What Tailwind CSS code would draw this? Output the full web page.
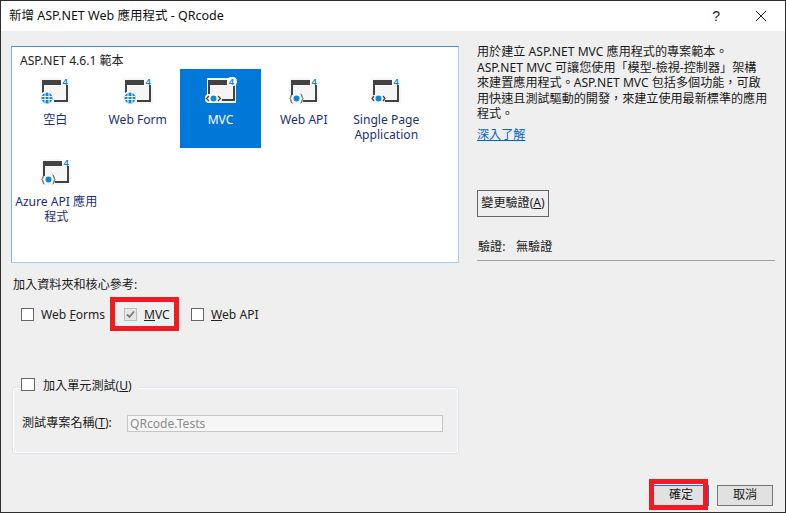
<!doctype html>
<html lang="zh-Hant">
<head>
<meta charset="utf-8">
<script src="https://cdn.jsdelivr.net/npm/@tailwindcss/browser@4"></script>
</head>
<body class="m-0 overflow-hidden">
<div class="w-[786px] h-[513px] flex flex-col bg-[#efefef] border border-[#2e2e2e] text-[12.1px] text-[#1a1a1a] font-['Noto_Sans','Noto_Sans_CJK_TC',sans-serif]">
  <!-- title bar -->
  <div class="h-[30px] shrink-0 bg-white flex items-center pl-[8px]">
    <span class="text-[12.5px] text-[#111]">新增 ASP.NET Web 應用程式 - QRcode</span>
    <span class="ml-auto text-[14px] leading-none mr-[35px] font-['Liberation_Sans'] text-[#222]">?</span>
    <svg class="mr-[18px]" width="12" height="12" viewBox="0 0 12 12"><path d="M1 1 L11 11 M11 1 L1 11" stroke="#222" stroke-width="1" fill="none"/></svg>
  </div>
  <!-- body -->
  <div class="flex flex-1 min-h-0">
    <!-- left column -->
    <div class="w-[458px] ml-[10px] shrink-0 flex flex-col">
      <div class="mt-[15px] h-[217px] w-[448px] bg-white border border-t-[#4b8fca] border-l-[#7fb2dc] border-r-[#a9cfee] border-b-[#a9cfee] pt-[6px] pl-[3px]">
        <div class="pl-[5px] h-[16px] leading-[16px] text-[#222]">ASP.NET 4.6.1 範本</div>
        <div class="grid grid-cols-[repeat(5,82.5px)] auto-rows-[79px]">
          <!-- 空白 -->
          <div class="flex flex-col items-center pt-[8px] pr-[2px] text-[#1c2f78] text-center leading-[15px]">
            <svg width="30" height="28" viewBox="0 0 30 28"><rect x="0" y="1" width="30" height="26" fill="#f6f6f6"/><path d="M2 3h19v5H4v12H2z" fill="#424242"/><path d="M26 8h2v17H14v-2h12z" fill="#424242"/><circle cx="7" cy="21" r="7" fill="#fff"/><circle cx="7" cy="21" r="5.5" fill="#0f87d8"/><path d="M2 19.500h10M2 22.500h10M5 16v10M9 16v10" stroke="#fff" stroke-width="1" fill="none"/><rect x="21" y="0" width="9" height="8" fill="#fff"/><text x="22.500" y="7.500" font-size="9.500" font-weight="700" fill="#0f87d8" font-family="Liberation Sans">4</text></svg>
            <span class="mt-[7px]">空白</span>
          </div>
          <!-- Web Form -->
          <div class="flex flex-col items-center pt-[8px] pr-[2px] text-[#1c2f78] text-center leading-[15px]">
            <svg width="30" height="28" viewBox="0 0 30 28"><rect x="0" y="1" width="30" height="26" fill="#f6f6f6"/><path d="M2 3h19v5H4v12H2z" fill="#424242"/><path d="M26 8h2v17H14v-2h12z" fill="#424242"/><circle cx="7" cy="21" r="7" fill="#fff"/><circle cx="7" cy="21" r="5.500" fill="#0f87d8"/><path d="M2 19.500h10M2 22.500h10M5 16v10M9 16v10" stroke="#fff" stroke-width="1" fill="none"/><rect x="21" y="0" width="9" height="8" fill="#fff"/><text x="22.500" y="7.500" font-size="9.500" font-weight="700" fill="#0f87d8" font-family="Liberation Sans">4</text></svg>
            <span class="mt-[7px]">Web Form</span>
          </div>
          <!-- MVC -->
          <div class="flex flex-col items-center pt-[8px] mr-[1.500px] bg-[#0078d7] text-white text-center leading-[15px]">
            <svg width="32" height="28" viewBox="0 0 32 28"><rect x="2" y="1" width="29" height="25" fill="#f4f4f4"/><path d="M3 3h19v5H5v12H3z" fill="#424242"/><path d="M28 8h2v16H15v-2h13z" fill="#424242"/><rect x="0" y="17" width="17" height="9" rx="4" fill="#fff"/><path d="M4 19l-2.500 2.500L4 24M13 19l2.500 2.500L13 24" stroke="#424242" stroke-width="1.300" fill="none"/><circle cx="8.500" cy="21.500" r="3" fill="#0f87d8"/><circle cx="27" cy="4.500" r="5" fill="#fff"/><text x="23.800" y="8" font-size="9.500" font-weight="700" fill="#0f87d8" font-family="Liberation Sans">4</text></svg>
            <span class="mt-[7px]">MVC</span>
          </div>
          <!-- Web API -->
          <div class="flex flex-col items-center pt-[8px] text-[#1c2f78] text-center leading-[15px]">
            <svg width="30" height="28" viewBox="0 0 30 28"><rect x="0" y="1" width="30" height="26" fill="#f6f6f6"/><path d="M2 3h19v5H4v10H2z" fill="#424242"/><path d="M26 8h2v17H14v-2h12z" fill="#424242"/><path d="M3.500 17c-2 0-1 3.500-2.500 4.500 1.500 1 .5 4.500 2.500 4.500M11.500 17c2 0 1 3.500 2.500 4.500-1.500 1-.5 4.500-2.500 4.500" stroke="#424242" stroke-width="1" fill="none"/><circle cx="7.500" cy="21.500" r="3" fill="#0f87d8"/><rect x="21" y="0" width="9" height="8" fill="#fff"/><text x="22.500" y="7.500" font-size="9.500" font-weight="700" fill="#0f87d8" font-family="Liberation Sans">4</text></svg>
            <span class="mt-[7px]">Web API</span>
          </div>
          <!-- SPA -->
          <div class="flex flex-col items-center pt-[8px] text-[#1c2f78] text-center leading-[15px]">
            <svg width="30" height="28" viewBox="0 0 30 28"><rect x="0" y="1" width="30" height="26" fill="#f6f6f6"/><path d="M2 3h19v5H4v10H2z" fill="#424242"/><path d="M26 8h2v17H14v-2h12z" fill="#424242"/><path d="M3 19l-2 2.500L3 24M12 19l2 2.500L12 24" stroke="#424242" stroke-width="1.300" fill="none"/><circle cx="7.500" cy="21.500" r="3" fill="#0f87d8"/><rect x="21" y="0" width="9" height="8" fill="#fff"/><text x="22.500" y="7.500" font-size="9.500" font-weight="700" fill="#0f87d8" font-family="Liberation Sans">4</text></svg>
            <span class="mt-[7px]">Single Page<br>Application</span>
          </div>
          <!-- Azure -->
          <div class="flex flex-col items-center pt-[10px] text-[#1c2f78] text-center leading-[15px]">
            <svg width="30" height="28" viewBox="0 0 30 28"><rect x="0" y="1" width="30" height="26" fill="#f6f6f6"/><path d="M2 3h19v5H4v10H2z" fill="#424242"/><path d="M26 8h2v17H14v-2h12z" fill="#424242"/><path d="M3.500 17c-2 0-1 3.500-2.500 4.500 1.500 1 .5 4.500 2.500 4.500M11.500 17c2 0 1 3.500 2.500 4.500-1.500 1-.5 4.500-2.500 4.500" stroke="#424242" stroke-width="1" fill="none"/><circle cx="7.500" cy="21.500" r="3" fill="#0f87d8"/><rect x="21" y="0" width="9" height="8" fill="#fff"/><text x="22.500" y="7.500" font-size="9.500" font-weight="700" fill="#0f87d8" font-family="Liberation Sans">4</text></svg>
            <span class="mt-[8px]">Azure API 應用<br>程式</span>
          </div>
        </div>
      </div>
      <div class="mt-[14px] pl-[2px] h-[16px] leading-[16px]">加入資料夾和核心參考:</div>
      <!-- checkboxes -->
      <div class="flex items-center mt-[4px] h-[34px]">
        <span class="w-[13px] h-[13px] ml-[10px] bg-white border border-[#666]"></span>
        <span class="ml-[7px] w-[69px] pt-[2px] text-[#222]">Web <u>F</u>orms</span>
        <div class="w-[69px] h-[34px] border-[5px] border-[#ed1c24] flex items-center pl-[9px]">
          <span class="w-[13px] h-[13px] bg-[#e6e6e6] border border-[#bcbcbc] flex items-center justify-center shrink-0">
            <svg width="11" height="11" viewBox="0 0 11 11"><path d="M2 5.500l2.500 2.500L9 2.500" stroke="#7a7a7a" stroke-width="1.800" fill="none"/></svg>
          </span>
          <span class="ml-[7px] pt-[2px] text-[#222]"><u>M</u>VC</span>
        </div>
        <span class="w-[13px] h-[13px] ml-[12px] bg-white border border-[#666]"></span>
        <span class="ml-[7px] pt-[2px] text-[#222]"><u>W</u>eb API</span>
      </div>
      <!-- unit test group -->
      <div class="relative mt-[56px] ml-[1px] w-[447px] h-[67px] border border-[#d9e4ee] shadow-[inset_0_0_0_1px_#ffffff] rounded-[3px] pt-[26px] pl-[9px]">
        <div class="absolute left-[8px] top-[-10px] flex items-center bg-[#efefef] pr-[6px] h-[16px]">
          <span class="w-[14px] h-[13px] -mt-[4px] bg-white border border-[#666]"></span>
          <span class="ml-[8px]">加入單元測試(<u>U</u>)</span>
        </div>
        <div class="flex items-center">
          <span class="w-[105px] shrink-0">測試專案名稱(<u>T</u>):</span>
          <div class="w-[316px] h-[17px] bg-[#f6f6f6] border border-[#c6c6c6] text-[#8a8a8a] pl-[2px] leading-[15px]">QRcode.Tests</div>
        </div>
      </div>
    </div>
    <!-- right column -->
    <div class="ml-[8px] w-[298px] shrink-0 flex flex-col">
      <p class="mt-[13px] leading-[15.5px] whitespace-nowrap">用於建立 ASP.NET MVC 應用程式的專案範本。<br>ASP.NET MVC 可讓您使用「模型-檢視-控制器」架構<br>來建置應用程式。ASP.NET MVC 包括多個功能，可啟<br>用快速且測試驅動的開發，來建立使用最新標準的應用<br>程式。</p>
      <a class="mt-[5px] h-[16px] leading-[16px] text-[#0066cc] underline w-fit">深入了解</a>
      <div class="mt-[47px] w-[72px] h-[27px] border border-[#666] bg-[#efefef] flex items-center justify-center">變更驗證(<u>A</u>)</div>
      <div class="mt-[22px] h-[16px] leading-[16px] pl-[1px] flex"><span class="w-[38px]">驗證:</span><span>無驗證</span></div>
      <div class="mt-[5px] h-px bg-[#a0a0a0]"></div>
    </div>
  </div>
  <!-- footer buttons -->
  <div class="h-[33px] shrink-0 flex items-start pl-[648px]">
    <div class="relative w-[60px] h-[31px] pt-[6px] pl-[3px]">
      <div class="w-[57px] h-[21px] border border-[#0078d7] bg-[#e1e1e1] flex items-center justify-center pl-[1px]">確定</div>
      <div class="absolute left-0 top-0 w-[59px] h-[31px] border-[5px] border-[#ed1c24]"></div>
    </div>
    <div class="ml-[8px] mt-[6px] w-[56px] h-[21px] border border-[#777] bg-[#e1e1e1] flex items-center justify-center">取消</div>
  </div>
</div>
</body>
</html>
